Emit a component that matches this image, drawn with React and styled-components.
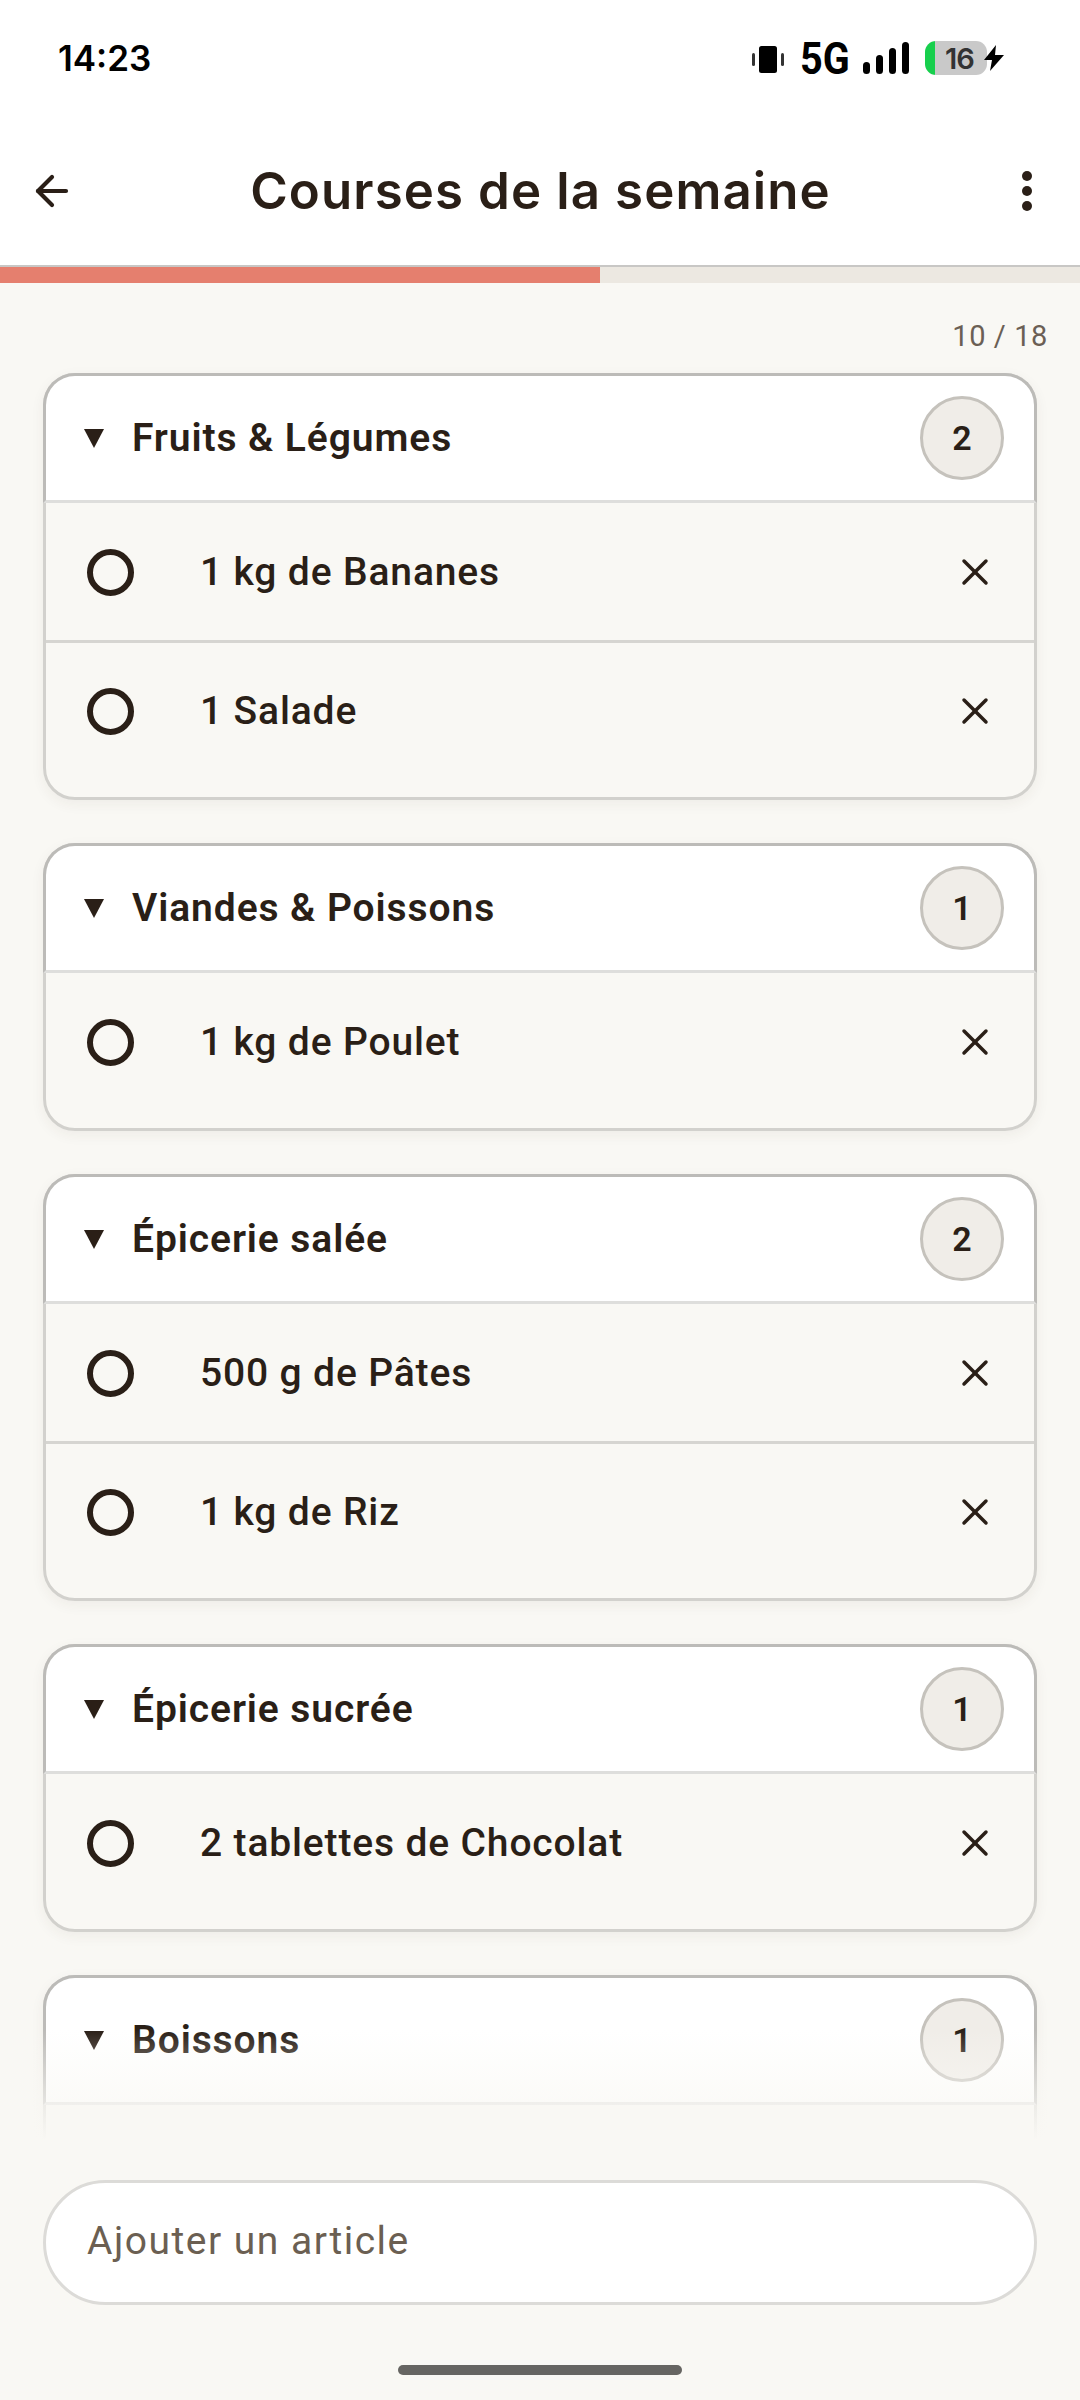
import styled, { createGlobalStyle } from "styled-components";
import { ArrowLeft, X } from "lucide-react";

const GlobalStyle = createGlobalStyle`
  html, body {
    margin: 0;
    padding: 0;
    background: #f9f8f4;
  }
  * {
    box-sizing: border-box;
  }
`;

const Page = styled.div`
  width: 1080px;
  height: 2400px;
  display: flex;
  flex-direction: column;
  overflow: hidden;
  background: #f9f8f4;
  color: #2a1f17;
  font-family: Roboto, "Liberation Sans", sans-serif;
`;

const StatusBar = styled.div`
  height: 116px;
  flex: none;
  display: flex;
  align-items: center;
  justify-content: space-between;
  padding: 0 75px 0 58px;
  background: #fff;
  color: #000;
`;

const Clock = styled.span`
  font-family: Inter, sans-serif;
  font-size: 35px;
  font-weight: 600;
`;

const StatusIcons = styled.div`
  display: flex;
  align-items: center;
`;

const Network = styled.span`
  margin: 0 17px 0 15px;
  font-size: 45px;
  font-weight: 700;
  line-height: 1;
  transform: scaleX(0.88);
  transform-origin: left center;
  width: 46px;
`;

const Battery = styled.div`
  width: 62px;
  height: 34px;
  margin-left: 16px;
  display: flex;
  align-items: center;
  justify-content: center;
  padding-left: 7px;
  border-radius: 11px;
  background: linear-gradient(to right, #17cf4d 10px, #c9c9c9 10px);
  color: #333;
  font-family: Inter, sans-serif;
  font-size: 29px;
  font-weight: 600;
  letter-spacing: -1px;
`;

const AppBar = styled.header`
  height: 151px;
  flex: none;
  display: flex;
  align-items: center;
  padding: 0 41px 0 28px;
  background: #fff;
  border-bottom: 2px solid #c8c7c5;
`;

const Title = styled.h1`
  flex: 1;
  margin: 0;
  padding-right: 10px;
  text-align: center;
  font-family: Inter, sans-serif;
  font-size: 51px;
  font-weight: 600;
  letter-spacing: 1.1px;
  color: #2a1f17;
`;

const IconButton = styled.button`
  display: flex;
  padding: 0;
  border: 0;
  background: none;
  color: #2a1f17;
`;

const Dots = styled.div`
  width: 24px;
  display: flex;
  flex-direction: column;
  align-items: center;
  gap: 5px;

  span {
    width: 10px;
    height: 10px;
    border-radius: 50%;
    background: #2a1f17;
  }
`;

const Track = styled.div`
  height: 16px;
  flex: none;
  background: #ece8e1;
`;

const Fill = styled.div`
  height: 100%;
  background: #e57f6e;
`;

const Scroll = styled.main`
  position: relative;
  height: 1862px;
  flex: none;
  overflow: hidden;
  padding: 0 43px;

  &::after {
    content: "";
    position: absolute;
    left: 0;
    right: 0;
    bottom: 0;
    height: 115px;
    background: linear-gradient(to bottom, rgba(249, 248, 244, 0), #f9f8f4 96%);
  }
`;

const Count = styled.div`
  height: 90px;
  padding: 36px 0 0;
  margin-right: -11px;
  text-align: right;
  font-size: 29px;
  line-height: 34px;
  letter-spacing: 0.6px;
  color: #6b5f55;
`;

const Card = styled.section`
  margin-bottom: 43px;
  padding-bottom: 16px;
  border: 3px solid #d2d1cd;
  border-radius: 32px;
  box-shadow: 0 4px 14px rgba(60, 50, 40, 0.06);
`;

const CardHeader = styled.div`
  height: 130px;
  margin: -3px -3px 0;
  display: flex;
  align-items: center;
  padding: 0 30px 0 38px;
  background: #fff;
  border: 3px solid #bcbbb8;
  border-bottom: 3px solid #dededc;
  border-radius: 32px 32px 0 0;
`;

const Caret = styled.svg`
  width: 20px;
  height: 20px;
  flex: none;
  margin-right: 28px;
  fill: #2a1f17;
`;

const CardName = styled.h2`
  flex: 1;
  margin: 0;
  font-size: 39px;
  font-weight: 600;
  letter-spacing: 0.9px;
  color: #2a1f17;
`;

const Badge = styled.span`
  width: 84px;
  height: 84px;
  display: flex;
  align-items: center;
  justify-content: center;
  border: 3px solid #c5c2bc;
  border-radius: 50%;
  background: #f0ede8;
  font-size: 34px;
  font-weight: 600;
`;

const Row = styled.div`
  height: 139px;
  display: flex;
  align-items: center;
  padding: 0 37px 0 41px;

  & + & {
    box-shadow: 0 -2px 0 #d6d5d1, inset 0 1px 0 #d6d5d1;
  }
`;

const Circle = styled.span`
  width: 47px;
  height: 47px;
  flex: none;
  margin-right: 66px;
  border: 6px solid #2a1f17;
  border-radius: 50%;
`;

const ItemName = styled.span`
  flex: 1;
  padding-bottom: 1px;
  font-size: 39px;
  font-weight: 500;
  letter-spacing: 0.85px;
  color: #2a1f17;
`;

const RemoveButton = styled(IconButton)`
  margin-top: -1px;
`;

const Footer = styled.footer`
  flex: 1;
  display: flex;
  flex-direction: column;
  padding: 35px 43px 0;
`;

const AddInput = styled.input`
  width: 100%;
  height: 125px;
  padding: 0 41px 4px;
  border: 3px solid #dcdbd8;
  border-radius: 63px;
  background: #fff;
  outline: none;
  font-family: Roboto, sans-serif;
  font-size: 39px;
  letter-spacing: 1.5px;

  &::placeholder {
    color: #6b5f52;
    opacity: 1;
  }
`;

const HomeBar = styled.div`
  width: 284px;
  height: 10px;
  margin: 60px auto 0;
  border-radius: 5px;
  background: #666562;
`;

// the last section runs under the fade, so its row is empty and its count is given
const sections = [
  { name: "Fruits & Légumes", items: ["1 kg de Bananes", "1 Salade"] },
  { name: "Viandes & Poissons", items: ["1 kg de Poulet"] },
  { name: "Épicerie salée", items: ["500 g de Pâtes", "1 kg de Riz"] },
  { name: "Épicerie sucrée", items: ["2 tablettes de Chocolat"] },
  { name: "Boissons", items: [], count: 1 },
];

function VibrateIcon() {
  return (
    <svg width="34" height="28" viewBox="0 0 34 28" style={{ marginTop: 3 }}>
      <rect x="8" y="0" width="18" height="27" rx="2.5" fill="#000" />
      <rect x="1" y="7" width="3" height="13" rx="1.5" fill="#333" />
      <rect x="30" y="7" width="3" height="13" rx="1.5" fill="#333" />
    </svg>
  );
}

function SignalIcon() {
  return (
    <svg width="46" height="32" viewBox="0 0 46 32">
      <rect x="0" y="20" width="7" height="12" rx="3.5" />
      <rect x="13" y="13" width="7" height="19" rx="3.5" />
      <rect x="26" y="6" width="7" height="26" rx="3.5" />
      <rect x="39" y="0" width="7" height="32" rx="3.5" />
    </svg>
  );
}

function BoltIcon() {
  return (
    <svg width="22" height="26" viewBox="0 0 22 26" style={{ marginLeft: -4 }}>
      <path d="M13 0 L1 15 H9 L7 26 L21 10 H12 Z" fill="#000" />
    </svg>
  );
}

function Section({ name, items, count }) {
  return (
    <Card>
      <CardHeader>
        <Caret viewBox="0 0 20 20">
          <polygon points="0,1 20,1 10,20" />
        </Caret>
        <CardName>{name}</CardName>
        <Badge>{count ?? items.length}</Badge>
      </CardHeader>
      {items.map((item) => (
        <Row key={item}>
          <Circle />
          <ItemName>{item}</ItemName>
          <RemoveButton aria-label="Supprimer">
            <X size={44} strokeWidth={1.9} />
          </RemoveButton>
        </Row>
      ))}
      {items.length === 0 && <Row />}
    </Card>
  );
}

export default function App() {
  return (
    <Page>
      <GlobalStyle />
      <StatusBar>
        <Clock>14:23</Clock>
        <StatusIcons>
          <VibrateIcon />
          <Network>5G</Network>
          <SignalIcon />
          <Battery>16</Battery>
          <BoltIcon />
        </StatusIcons>
      </StatusBar>
      <AppBar>
        <IconButton aria-label="Retour">
          <ArrowLeft size={48} strokeWidth={2.1} />
        </IconButton>
        <Title>Courses de la semaine</Title>
        <IconButton aria-label="Menu">
          <Dots>
            <span />
            <span />
            <span />
          </Dots>
        </IconButton>
      </AppBar>
      <Track>
        <Fill style={{ width: `${(10 / 18) * 100}%` }} />
      </Track>
      <Scroll>
        <Count>10 / 18</Count>
        {sections.map((section) => (
          <Section key={section.name} {...section} />
        ))}
      </Scroll>
      <Footer>
        <AddInput placeholder="Ajouter un article" />
        <HomeBar />
      </Footer>
    </Page>
  );
}
